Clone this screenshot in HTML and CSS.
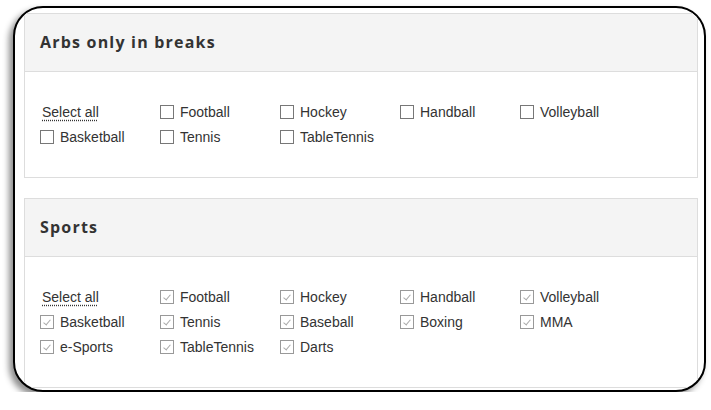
FILE: index.html
```html
<!DOCTYPE html>
<html lang="en">
<head>
    <meta charset="UTF-8">
    <title>Arbs settings</title>
    <link rel="stylesheet" href="styles.css">
</head>
<body>
    <div class="frame">
        <div class="panel">
            <div class="panel-head">Arbs only in breaks</div>
            <div class="panel-body">
                <span class="select-all">Select all</span>
                <label class="item"><span class="box"></span>Football</label>
                <label class="item"><span class="box"></span>Hockey</label>
                <label class="item"><span class="box"></span>Handball</label>
                <label class="item"><span class="box"></span>Volleyball</label>
                <label class="item"><span class="box"></span>Basketball</label>
                <label class="item"><span class="box"></span>Tennis</label>
                <label class="item"><span class="box"></span>TableTennis</label>
            </div>
        </div>

        <div class="panel">
            <div class="panel-head">Sports</div>
            <div class="panel-body">
                <span class="select-all">Select all</span>
                <label class="item"><span class="box checked"></span>Football</label>
                <label class="item"><span class="box checked"></span>Hockey</label>
                <label class="item"><span class="box checked"></span>Handball</label>
                <label class="item"><span class="box checked"></span>Volleyball</label>
                <label class="item"><span class="box checked"></span>Basketball</label>
                <label class="item"><span class="box checked"></span>Tennis</label>
                <label class="item"><span class="box checked"></span>Baseball</label>
                <label class="item"><span class="box checked"></span>Boxing</label>
                <label class="item"><span class="box checked"></span>MMA</label>
                <label class="item"><span class="box checked"></span>e-Sports</label>
                <label class="item"><span class="box checked"></span>TableTennis</label>
                <label class="item"><span class="box checked"></span>Darts</label>
            </div>
        </div>
    </div>
</body>
</html>
```

FILE: styles.css
```css
body {
    margin: 0;
    background: #fff;
    font-family: "Liberation Sans", Arial, sans-serif;
    color: #333;
}

.frame {
    box-sizing: border-box;
    width: 693px;
    height: 386px;
    margin: 6px 0 0 13px;
    padding: 5px 6px 0 9px;
    border: 2px solid #000;
    border-radius: 30px;
    overflow: hidden;
    background: #fff;
    box-shadow: -4px 4px 6px rgba(0, 0, 0, 0.45);
}

.panel {
    border: 1px solid #ddd;
    margin-bottom: 20px;
}

.panel-head {
    height: 57px;
    line-height: 57px;
    padding-left: 15px;
    background: #f4f4f4;
    border-bottom: 1px solid #ddd;
    font-family: "Open Sans", sans-serif;
    font-weight: 700;
    font-size: 16px;
    letter-spacing: 1.2px;
    color: #333;
}

.panel-body {
    display: flex;
    flex-wrap: wrap;
    padding: 27px 15px 28px 15px;
}

.select-all,
.item {
    width: 120px;
    height: 25px;
    display: flex;
    align-items: center;
    font-size: 14px;
}

.select-all {
    box-sizing: border-box;
    padding-left: 2px;
    text-decoration: underline dotted #333;
    text-underline-offset: 3px;
}

.box {
    box-sizing: border-box;
    width: 14px;
    height: 14px;
    border: 1px solid #777;
    margin-right: 6px;
    position: relative;
}

.box.checked {
    border-color: #999;
}

.box.checked::after {
    content: "";
    position: absolute;
    left: 4px;
    top: 2px;
    width: 3px;
    height: 6px;
    border-right: 1px solid #aaa;
    border-bottom: 1px solid #aaa;
    transform: rotate(40deg);
}
```
